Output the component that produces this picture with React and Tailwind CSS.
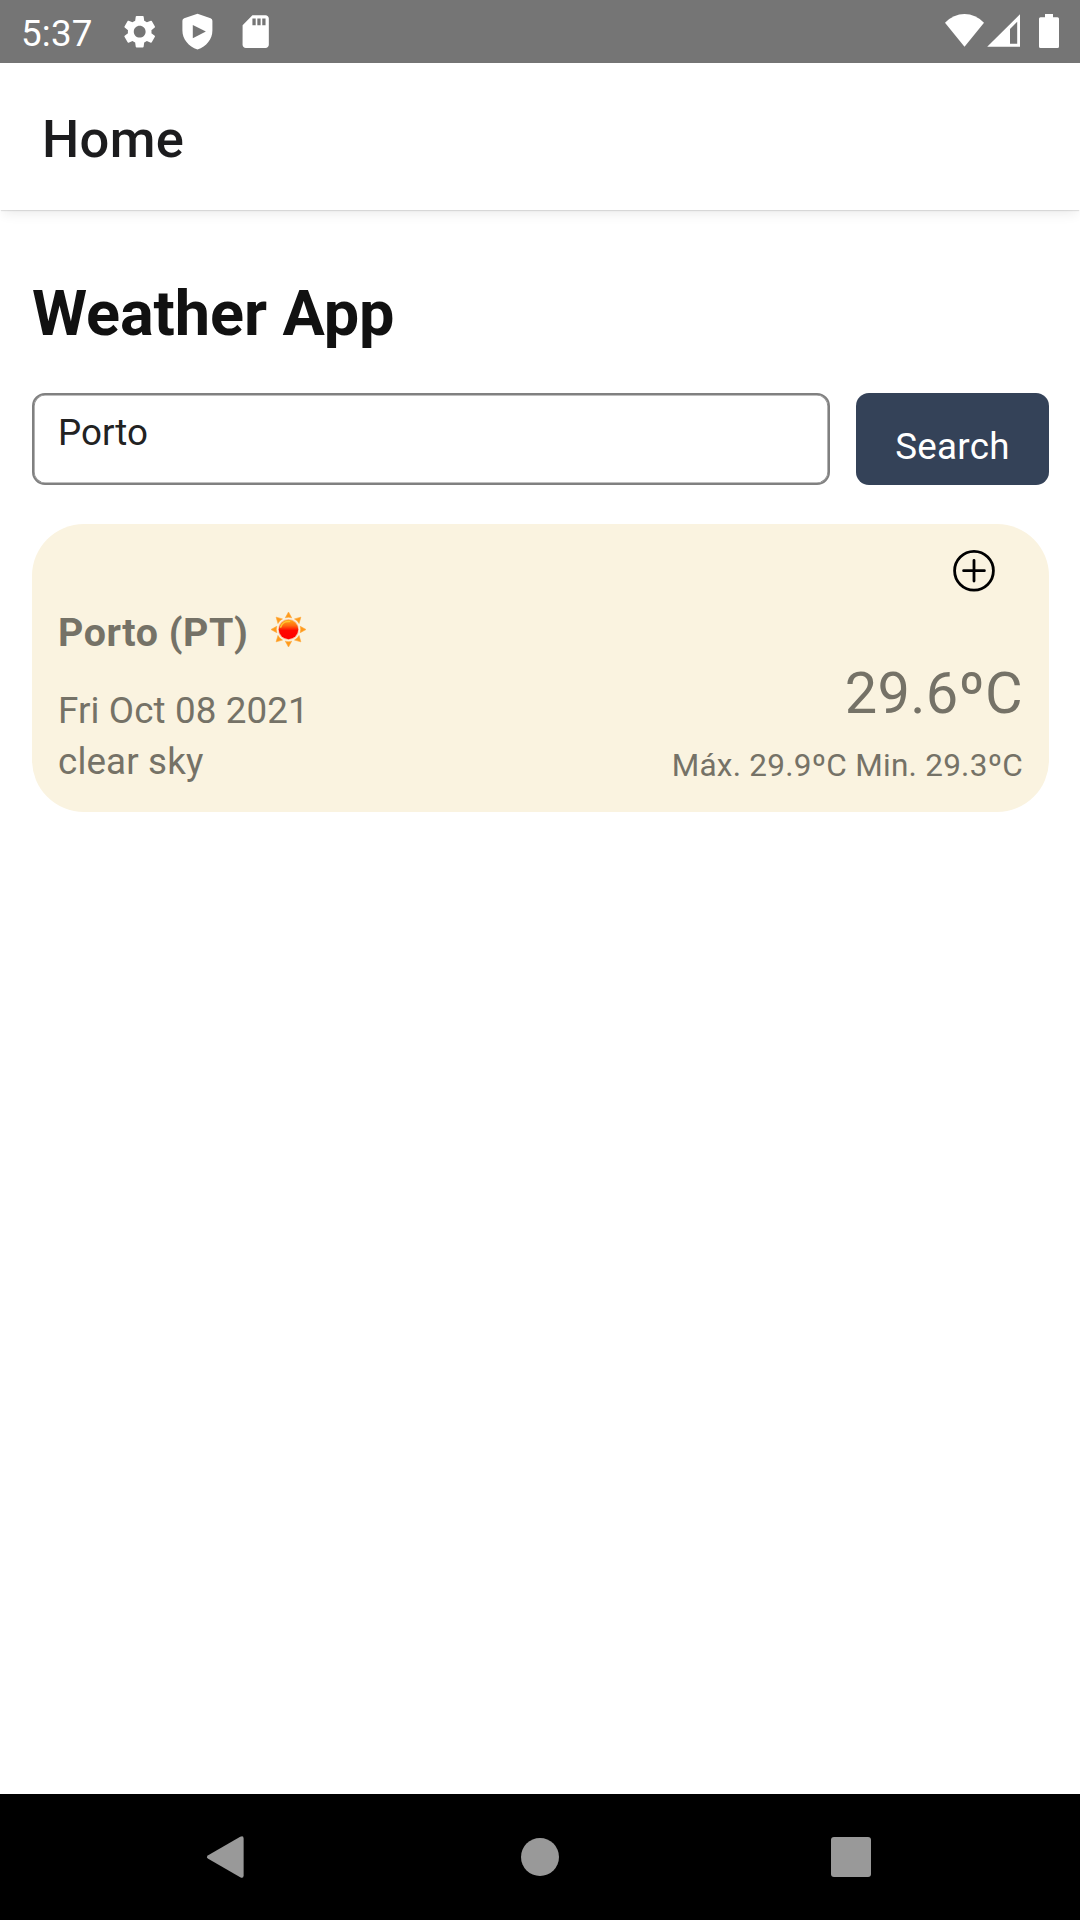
import React from "react";
import { MdSettings, MdSdCard } from "react-icons/md";

function StatusBar() {
  return (
    <div className="flex h-[63px] items-start bg-[#757575] pl-[21px] pr-[21px] text-white">
      <span className="mt-[12px] w-[99px] text-[36.75px] leading-[43px] tracking-[0.2px]">5:37</span>
      <MdSettings className="mt-[12px] size-[39.4px]" />
      <svg className="ml-[23px] mt-[13px] h-[37px] w-[31px]" viewBox="0 0 31 37" fill="currentColor">
        <path
          fillRule="evenodd"
          d="M15.5 .7 28.6 5.2Q30.4 5.9 30.4 7.8V17.5C30.4 26 24.5 33.6 15.5 36.4 6.500 33.6.4 26 .4 17.5V7.800Q.4 5.9 2.200 5.200ZM10.800 12V25.300L23.900 18.600Z"
        />
      </svg>
      <MdSdCard className="ml-[23px] mt-[12px] size-[39.4px]" />
      <div className="ml-auto flex pt-[13px]">
        <svg className="h-[36px] w-[114px]" viewBox="945 13 114 36" fill="currentColor">
          <path d="M945 22.700Q953.500 14 964.500 14T984 22.700L964.500 46.800Z" />
          <path fillRule="evenodd" d="M1020 14.300V46.800H987.200ZM1017.200 21.700 1010 28.900V43.700H1017.200Z" />
          <path d="M1045 14H1053V17.300H1057.500Q1059 17.300 1059 18.800V46.400Q1059 47.900 1057.500 47.900H1040.500Q1039 47.900 1039 46.400V18.800Q1039 17.300 1040.500 17.300H1045Z" />
        </svg>
      </div>
    </div>
  );
}

function SunIcon() {
  const rays = [0, 45, 90, 135, 180, 225, 270, 315];
  return (
    <svg className="ml-[21px] mt-px size-[39px]" viewBox="-19.500 -19.500 39 39">
      <defs>
        <linearGradient id="sun" x1="0" y1="0" x2="0" y2="1">
          <stop offset="0" stopColor="#ffa81c" />
          <stop offset="0.3" stopColor="#ff6a10" />
          <stop offset="0.55" stopColor="#ff0800" />
          <stop offset="1" stopColor="#ff0000" />
        </linearGradient>
      </defs>
      {rays.map((a) => (
        <path
          key={a}
          d="M0-17.500 3.200-11.700Q0-12.800-3.200-11.700Z"
          fill="#ff9a1a"
          stroke="#ffa83a"
          strokeWidth="0.600"
          transform={`rotate(${a})`}
        />
      ))}
      <circle r="10.500" fill="#fbc09a" />
      <circle r="9.700" fill="url(#sun)" />
      <path d="M-7.800-2.500A8.200 8.200 0 0 1 1-8" fill="none" stroke="#ffc530" strokeWidth="1.600" strokeLinecap="round" />
    </svg>
  );
}

function WeatherCard() {
  return (
    <section className="mt-[39px] h-[288px] rounded-[52px] bg-[#faf3e0] pt-[25px] text-[#757267]">
      <div className="flex justify-end pr-[53px]">
        <svg className="size-[43px]" viewBox="0 0 43 43" fill="none" stroke="#000" strokeWidth="2.800" strokeLinecap="round">
          <circle cx="21" cy="21.700" r="19.400" />
          <path d="M10.600 21.700H31.400M21 11.300V32.100" />
        </svg>
      </div>
      <div className="flex justify-between px-[26px]">
        <div className="pt-[17px]">
          <div className="flex h-[47px] items-start">
            <h2 className="text-[39.375px] font-bold leading-[47px] tracking-[0.55px]">Porto (PT)</h2>
            <SunIcon />
          </div>
          <p className="mt-[33px] text-[36.75px] leading-[43px] tracking-[0.12px]">Fri Oct 08 2021</p>
          <p className="mt-[8px] text-[36.75px] leading-[43px] tracking-[0.15px]">clear sky</p>
        </div>
        <div className="pt-[67px] text-right">
          <p className="text-[57.75px] leading-[68px] tracking-[0.3px]">29.6ºC</p>
          <p className="mt-[20px] text-[31.5px] leading-[37px] tracking-[0.26px]">Máx. 29.9ºC Min. 29.3ºC</p>
        </div>
      </div>
    </section>
  );
}

function NavBar() {
  return (
    <nav className="flex h-[126px] items-center justify-between bg-black pl-[206px] pr-[209px]">
      <svg className="size-[42px]" viewBox="0 0 42 42" fill="#999">
        <path d="M34.200 .7Q37.600-1 37.600 2.400V39.600Q37.600 43 34.200 41.300L2.200 22.800Q-.400 21 2.200 19.200Z" />
      </svg>
      <div className="size-[38px] rounded-full bg-[#999]" />
      <div className="size-[40px] rounded-[3px] bg-[#999]" />
    </nav>
  );
}

export default function App() {
  return (
    <div className="flex h-[1920px] w-[1080px] flex-col overflow-hidden bg-white font-['Roboto',sans-serif]">
      <StatusBar />
      <header className="h-[147px] bg-white pl-[42px] pt-[46px] shadow-[0_6px_12px_-3px_rgba(0,0,0,0.09),0_2px_1px_-1px_rgba(0,0,0,0.1)]">
        <div className="text-[52.5px] font-medium leading-[60px] tracking-[0.3px] text-[#1c1c1e]">Home</div>
      </header>
      <main className="flex-1 pl-[32px] pr-[31px] pt-[67px]">
        <h1 className="text-[63px] font-bold leading-[74px] tracking-[-0.1px] text-[#111]">Weather App</h1>
        <div className="mt-[42px] flex h-[92px] gap-[26px]">
          <div className="w-[798px] rounded-[13px] border-2 border-[#808080] pl-[24px] pt-[16px] text-[36.75px] leading-[43px] text-[#222] shadow-[inset_0_0_0_0.6px_#808080]">
            Porto
          </div>
          <button className="flex w-[193px] justify-center rounded-[13px] bg-[#344258] pt-[32px] text-[36.75px] leading-[43px] tracking-[0.3px] text-white">
            Search
          </button>
        </div>
        <WeatherCard />
      </main>
      <NavBar />
    </div>
  );
}
